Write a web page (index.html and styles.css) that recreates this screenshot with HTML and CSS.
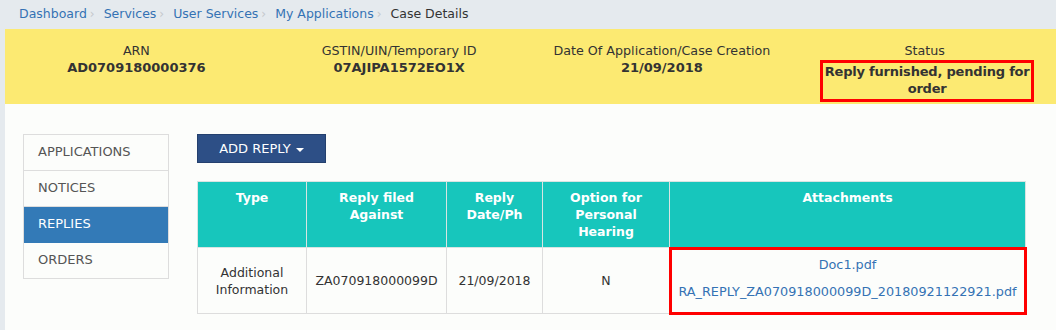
FILE: index.html
```html
<!DOCTYPE html>
<html lang="en">
<head>
    <meta charset="UTF-8">
    <title>Case Details</title>
    <link rel="stylesheet" href="styles.css">
</head>
<body>
    <div class="breadcrumb">
        <a href="#">Dashboard</a><span class="sep">›</span>
        <a href="#">Services</a><span class="sep">›</span>
        <a href="#">User Services</a><span class="sep">›</span>
        <a href="#">My Applications</a><span class="sep">›</span>
        <span class="current">Case Details</span>
    </div>

    <div class="page">
        <!-- case summary -->
        <div class="summary">
            <div class="summary-col">
                <div class="label">ARN</div>
                <div class="value">AD0709180000376</div>
            </div>
            <div class="summary-col">
                <div class="label">GSTIN/UIN/Temporary ID</div>
                <div class="value">07AJIPA1572EO1X</div>
            </div>
            <div class="summary-col">
                <div class="label">Date Of Application/Case Creation</div>
                <div class="value">21/09/2018</div>
            </div>
            <div class="summary-col">
                <div class="label">Status</div>
                <div class="value highlight">Reply furnished, pending for<br>order</div>
            </div>
        </div>

        <div class="content">
            <div class="side-nav">
                <a href="#">APPLICATIONS</a>
                <a href="#">NOTICES</a>
                <a href="#" class="active">REPLIES</a>
                <a href="#">ORDERS</a>
            </div>

            <div class="main">
                <button class="btn-add">ADD REPLY <span class="caret"></span></button>

                <table class="replies">
                    <thead>
                        <tr>
                            <th class="col-type">Type</th>
                            <th class="col-against">Reply filed<br>Against</th>
                            <th class="col-date">Reply Date/Ph</th>
                            <th class="col-option">Option for Personal Hearing</th>
                            <th>Attachments</th>
                        </tr>
                    </thead>
                    <tbody>
                        <tr>
                            <td>Additional<br>Information</td>
                            <td>ZA070918000099D</td>
                            <td>21/09/2018</td>
                            <td>N</td>
                            <td class="attachments">
                                <a href="#">Doc1.pdf</a>
                                <a href="#">RA_REPLY_ZA070918000099D_20180921122921.pdf</a>
                            </td>
                        </tr>
                    </tbody>
                </table>
            </div>
        </div>
    </div>
</body>
</html>
```

FILE: styles.css
```css
body {
    margin: 0;
    font-family: "DejaVu Sans", Verdana, sans-serif;
    font-size: 12px;
    color: #333;
    background-color: #e5eaee;
}

a {
    color: #3472b4;
    text-decoration: none;
}

/* breadcrumb */
.breadcrumb {
    height: 29px;
    display: flex;
    align-items: center;
    padding-left: 19px;
    font-size: 12.5px;
    padding-bottom: 2px;
    box-sizing: border-box;
}

.breadcrumb .sep {
    color: #c4c8cc;
    font-size: 12px;
    margin: 0 9px 0 3px;
}

.breadcrumb .current {
    color: #333;
}

.page {
    margin-left: 5px;
    background-color: #fcfdfb;
    height: 301px;
}

/* summary strip */
.summary {
    background-color: #fcea72;
    display: flex;
    height: 75px;
    padding-top: 13px;
    box-sizing: border-box;
}

.summary-col {
    flex: 1;
    text-align: center;
    line-height: 17px;
}

.label {
    font-size: 12.7px;
}

.value {
    font-size: 13px;
    font-weight: bold;
}

.value.highlight {
    display: inline-block;
    width: 208px;
    white-space: nowrap;
    letter-spacing: -0.2px;
    border: 3px solid #ff0000;
    padding: 0 0 2px;
    margin-top: 1px;
    margin-left: 5px;
}

/* content */
.content {
    display: flex;
    padding: 30px 30px 0 18px;
    gap: 28px;
}

.side-nav {
    width: 146px;
    border: 1px solid #ddd;
    box-sizing: border-box;
    display: flex;
    flex-direction: column;
    align-self: flex-start;
}

.side-nav a {
    height: 35px;
    line-height: 34px;
    padding-left: 14px;
    color: #555;
    font-size: 13px;
    border-bottom: 1px solid #ddd;
}

.side-nav a:last-child {
    border-bottom: none;
}

.side-nav a.active {
    background-color: #337ab7;
    color: #fff;
    border-bottom-color: #337ab7;
}

.main {
    flex: 1;
    display: flex;
    flex-direction: column;
    align-items: flex-start;
    gap: 18px;
}

.btn-add {
    width: 129px;
    height: 29px;
    background-color: #2d4f86;
    color: #fff;
    border: 1px solid #24406e;
    font-family: inherit;
    font-size: 13px;
    padding: 0;
    cursor: pointer;
}

.caret {
    display: inline-block;
    width: 0;
    height: 0;
    border-left: 4px solid transparent;
    border-right: 4px solid transparent;
    border-top: 4px solid #fff;
    vertical-align: middle;
    margin-left: 1px;
}

/* replies table */
.replies {
    width: 829px;
    table-layout: fixed;
    border-collapse: collapse;
    font-size: 12.5px;
}

.replies th {
    background-color: #17c6bc;
    color: #fff;
    font-weight: bold;
    vertical-align: top;
    line-height: 17px;
    height: 58px;
    padding: 7px 4px 0;
    border: 1px solid #d8e4e2;
}

.replies td {
    text-align: center;
    line-height: 17px;
    height: 65px;
    border: 1px solid #ddd;
    padding: 0 4px;
}

.col-type { width: 100px; }
.col-against { width: 131px; }
.col-date { width: 87px; }
.col-option { width: 118px; }

.replies td.attachments {
    font-size: 12.8px;
    height: 59px;
    padding-bottom: 6px;
    outline: 3px solid #ff0000;
    outline-offset: -2px;
}

.attachments a {
    display: block;
    line-height: 27px;
}
```
